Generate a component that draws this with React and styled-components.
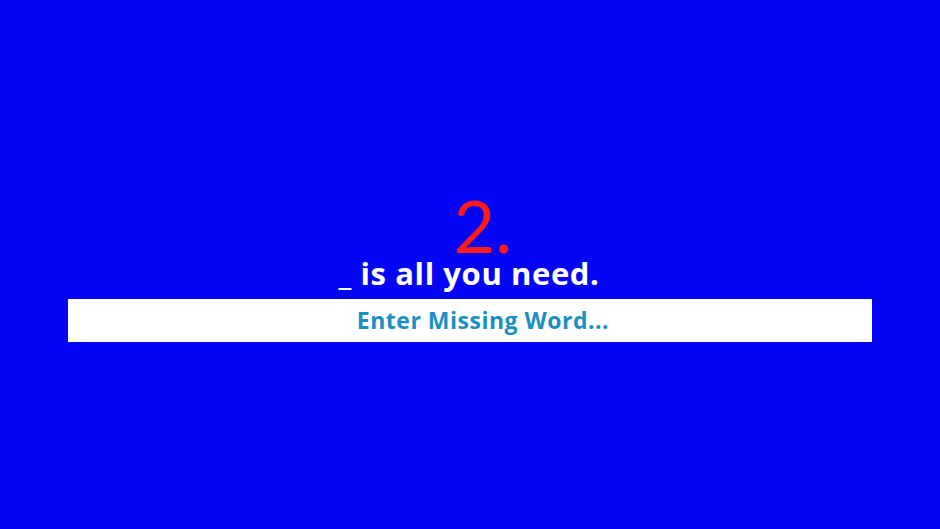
import React, {useState} from 'react';
import styled, {createGlobalStyle} from "styled-components";

const GlobalStyle = createGlobalStyle`
  html, body {
    margin: 0;
    padding: 0;
    background: #0505f5;
  }
`;

const Page = styled.div`
  width: 100vw;
  height: 100vh;
  background: #0505f5;
  display: flex;
  flex-direction: column;
  align-items: center;
  padding-top: 196px;
  box-sizing: border-box;
  font-family: "Lato", "Open Sans", sans-serif;
`;

const Number = styled.h1`
  margin: 0 0 4px 26px;
  font-size: 72px;
  line-height: 59px;
  font-weight: 400;
  color: #ff1a1a;
`;

const Prompt = styled.h2`
  margin: 0 0 0 -2px;
  font-size: 31px;
  line-height: 28px;
  font-weight: 700;
  color: #ffffff;
  font-family: "Open Sans", "Lato", sans-serif;
  letter-spacing: 0.6px;
`;

const WordInput = styled.input`
  margin-top: 12px;
  width: 804px;
  height: 43px;
  box-sizing: border-box;
  border: none;
  outline: none;
  background: #ffffff;
  text-align: center;
  padding: 0 0 2px 26px;
  font-family: "Open Sans", "Lato", sans-serif;
  font-size: 23px;
  font-weight: 700;
  letter-spacing: 0.5px;
  color: #1a8fc4;

  &::placeholder {
    color: #1a8fc4;
    opacity: 1;
  }
`;

export default function App() {
    const [word, setWord] = useState('');

    return (
        <Page>
            <GlobalStyle/>
            <Number>2.</Number>
            <Prompt>_ is all you need.</Prompt>
            <WordInput
                value={word}
                onChange={e => setWord(e.target.value)}
                placeholder={"Enter Missing Word..."}
            />
        </Page>
    );
}
